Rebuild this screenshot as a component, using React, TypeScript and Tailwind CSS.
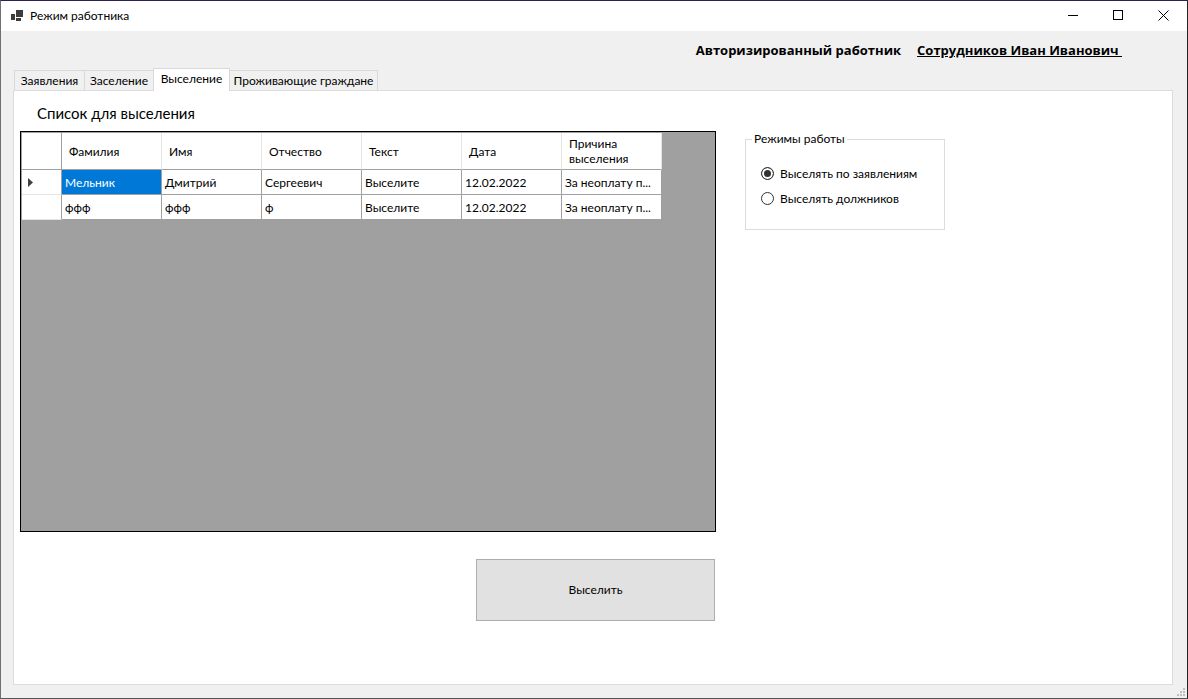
import { useState } from "react";

const tabs = [
  { label: "Заявления", width: "w-[71px]" },
  { label: "Заселение", width: "w-[70px]" },
  { label: "Выселение", width: "w-[77px]" },
  { label: "Проживающие граждане", width: "w-[149px]" },
];

const columns = ["Фамилия", "Имя", "Отчество", "Текст", "Дата", "Причина выселения"];

const rows = [
  ["Мельник", "Дмитрий", "Сергеевич", "Выселите", "12.02.2022", "За неоплату п..."],
  ["ффф", "ффф", "ф", "Выселите", "12.02.2022", "За неоплату п..."],
];

const modes = ["Выселять по заявлениям", "Выселять должников"];

function TitleBar() {
  return (
    <header className="flex h-[30px] shrink-0 items-center bg-white pl-[10px]">
      <svg width="13" height="12" viewBox="0 0 13 12" fill="#3c3c3c" shapeRendering="crispEdges" aria-hidden="true">
        <rect x="5" y="0" width="7" height="7" />
        <rect x="0" y="4" width="4" height="6" />
        <rect x="5" y="8" width="5" height="3" />
      </svg>
      <h1 className="ml-[6px] grow text-[12px] leading-4">Режим работника</h1>
      <button type="button" aria-label="Свернуть" className="flex h-full w-[46px] items-center justify-center">
        <svg width="10" height="10" viewBox="0 0 10 10" shapeRendering="crispEdges">
          <rect y="4" width="10" height="1" />
        </svg>
      </button>
      <button type="button" aria-label="Развернуть" className="flex h-full w-[44px] items-center justify-center">
        <svg width="10" height="12" viewBox="0 0 10 12" fill="none" stroke="#000" shapeRendering="crispEdges">
          <rect x="0.5" y="0.5" width="9" height="9" />
        </svg>
      </button>
      <button type="button" aria-label="Закрыть" className="flex h-full w-[47px] items-center justify-center">
        <svg width="11" height="12" viewBox="0 0 11 12" fill="none" stroke="#000">
          <path d="M0.5 0.5 10.5 10.5M10.5 0.5 0.5 10.5" />
        </svg>
      </button>
    </header>
  );
}

function EvictionTable() {
  return (
    <div className="h-[401px] overflow-hidden border border-black bg-[#a0a0a0]">
      <table className="w-[641px] table-fixed border-separate border-spacing-0 border-t border-l border-[#a0a0a0] text-left text-[12px] leading-[15px]">
        <colgroup>
          <col className="w-[40px]" />
          {columns.map((c) => (
            <col key={c} className="w-[100px]" />
          ))}
        </colgroup>
        <thead>
          <tr className="h-[37px]">
            <td className="border-r border-b border-[#a0a0a0] bg-white" />
            {columns.map((c) => (
              <th key={c} scope="col" className="border-r border-b border-r-[#e5e5e5] border-b-[#a0a0a0] bg-white px-[7px] py-0 font-normal">
                {c}
              </th>
            ))}
          </tr>
        </thead>
        <tbody>
          {rows.map((row, r) => (
            <tr key={r} className="h-[25px]">
              <th scope="row" className="border-r border-b border-r-[#a0a0a0] border-b-[#e5e5e5] bg-white py-0 pl-[6px]">
                {r === 0 && (
                  <svg width="5" height="9" viewBox="0 0 5 9" fill="#404040" role="img" aria-label="Текущая строка">
                    <path d="M0 0 5 4.5 0 9Z" />
                  </svg>
                )}
              </th>
              {row.map((cell, c) => (
                <td
                  key={c}
                  className={
                    r === 0 && c === 0
                      ? "truncate border-r border-b border-[#a0a0a0] bg-[#0078d7] px-[3px] py-0 text-white"
                      : "truncate border-r border-b border-[#a0a0a0] bg-white px-[3px] py-0"
                  }
                >
                  {cell}
                </td>
              ))}
            </tr>
          ))}
        </tbody>
      </table>
    </div>
  );
}

function ModeGroup() {
  const [mode, setMode] = useState(0);
  return (
    <fieldset className="h-[99px] w-[200px] border border-[#dcdcdc] pl-[15px] text-[12px]">
      <legend className="-ml-[9px] px-[2px] leading-4">Режимы работы</legend>
      <div className="flex flex-col gap-[9px] pt-[19px]">
        {modes.map((label, i) => (
          <label key={label} className="flex items-start gap-[6px] leading-4">
            <input
              type="radio"
              name="mode"
              checked={mode === i}
              onChange={() => setMode(i)}
              className="mt-px size-[13px] shrink-0 appearance-none rounded-full border border-[#333] bg-white checked:bg-[#333] checked:shadow-[inset_0_0_0_2px_#fff]"
            />
            {label}
          </label>
        ))}
      </div>
    </fieldset>
  );
}

export default function App() {
  const [active, setActive] = useState(2);
  return (
    <div className="flex min-h-screen flex-col border border-t-[#2c2150] border-r-[#222] border-b-[#555] border-l-[#707070] bg-[#f0f0f0] font-['Lato','Open_Sans',sans-serif] text-black">
      <TitleBar />
      <main className="flex grow flex-col pr-[14px] pl-[12px]">
        <div className="flex justify-end gap-[16px] pt-[9px] pr-[51px] font-['Open_Sans',sans-serif] text-[13px] leading-5 font-bold">
          <span>Авторизированный работник</span>
          <span className="whitespace-pre underline">{"Сотрудников Иван Иванович "}</span>
        </div>
        <div role="tablist" className="mt-[8px] flex h-[22px] items-end pl-px">
          {tabs.map((t, i) => (
            <button
              key={t.label}
              type="button"
              role="tab"
              aria-selected={active === i}
              onClick={() => setActive(i)}
              className={`${t.width} shrink-0 whitespace-nowrap text-center text-[12px] leading-4 ${
                active === i
                  ? "relative z-10 -mr-px -mb-px h-[23px] border border-b-0 border-[#d9d9d9] bg-white pb-[3px]"
                  : "-mr-px h-[20px] border border-b-0 border-[#d9d9d9] bg-[#f0f0f0]"
              }`}
            >
              {t.label}
            </button>
          ))}
        </div>
        <section role="tabpanel" className="flex grow items-start gap-[29px] border border-[#dcdcdc] bg-white pl-[6px]">
          <div className="flex w-[696px] shrink-0 flex-col">
            <h2 className="pt-[12px] pb-[8px] pl-[17px] text-[15px] leading-5">Список для выселения</h2>
            <EvictionTable />
            <button
              type="button"
              className="mt-[27px] mr-px h-[62px] w-[239px] self-end border border-[#adadad] bg-[#e1e1e1] text-[12px]"
            >
              Выселить
            </button>
          </div>
          <div className="pt-[40px]">
            <ModeGroup />
          </div>
        </section>
      </main>
      <footer className="flex h-[13px] shrink-0 items-end justify-end pr-[2px] pb-[2px]">
        <svg width="8" height="8" viewBox="0 0 8 8" fill="#bfbfbf" shapeRendering="crispEdges" aria-hidden="true">
          <path d="M6 0h2v2h-2zM3 3h2v2h-2zM6 3h2v2h-2zM0 6h2v2h-2zM3 6h2v2h-2zM6 6h2v2h-2z" />
        </svg>
      </footer>
    </div>
  );
}
